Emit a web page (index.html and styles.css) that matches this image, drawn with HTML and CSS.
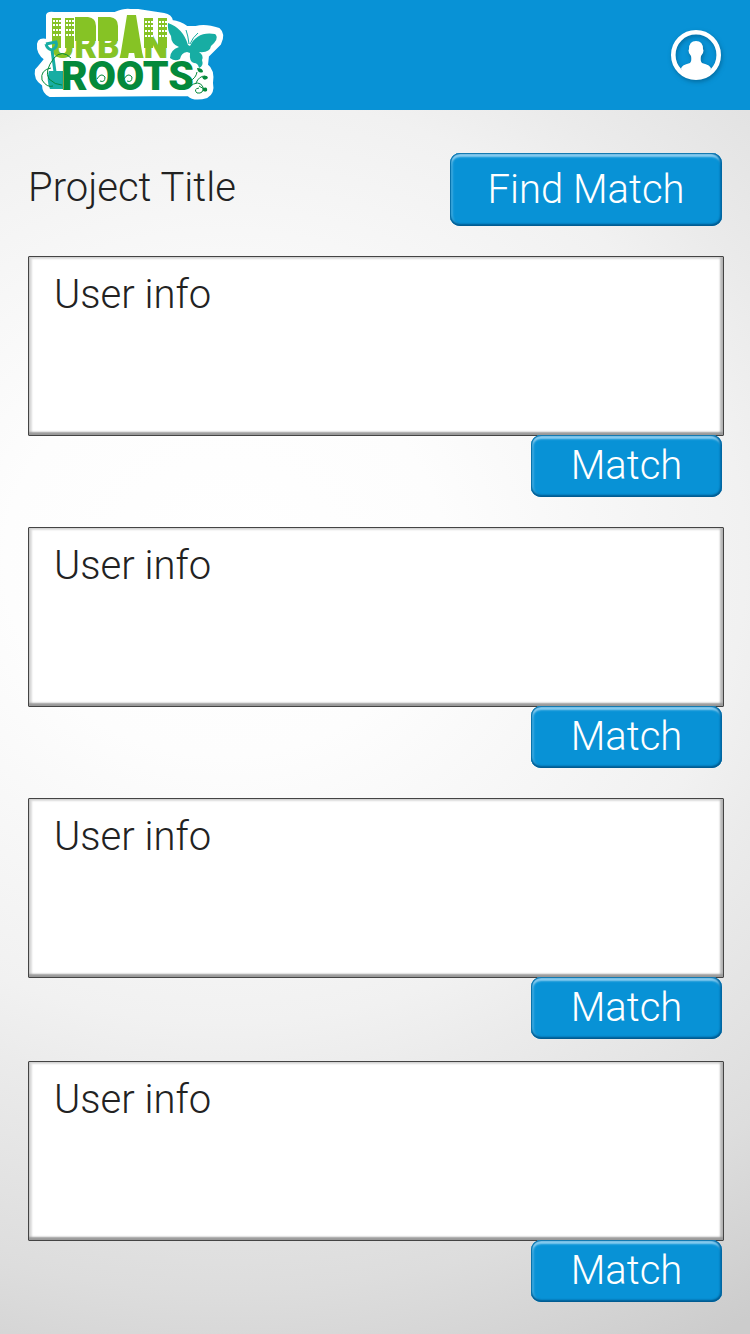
FILE: index.html
```html
<!DOCTYPE html>
<html lang="en">
<head>
<meta charset="utf-8">
<meta name="viewport" content="width=device-width, initial-scale=1">
<title>Urban Roots</title>
<link rel="stylesheet" href="styles.css">
</head>
<body>
<header class="topbar">
  <a class="brand" href="#" aria-label="Urban Roots">
    <svg class="brand-logo" viewBox="30 5 200 100" width="200" height="100">
      <path class="sticker" d="M47 15 Q48 12 54 13 L115 13 Q125 9 130 10 L138 10 L164 14 Q171 15 172 21 Q180 22 187 27 L196 27 Q205 24 219 29 Q225 34 220 44 L208 56 L207 65 Q214 70 212 83 Q214 93 207 97 Q194 101 188 95 L50 96 Q43 93 43 85 Q34 79 36 70 Q42 63 45 59 Q37 53 38 44 Q39 38 47 40 Z"/>
      <g class="lime">
        <path d="M52 18h9v30h-9zM65 18h9v30h-9zM75 17h13q8 1 8 9v15H75zM98 17h12q8 1 8 9v15H98zM127 15h9l7 43h-8l-1-6h-5l-1 6h-8zM144 18h9v30h-9zM158 18h9v30h-9z"/>
        <text class="urban" x="51" y="58">URBAN</text>
      </g>
      <path class="windows" d="M53 21h8M53 25h8M53 30h8M53 35h8M66 21h8M66 25h8M66 30h8M66 35h8M145 22h8M145 26h8M145 31h8M145 36h8M159 22h8M159 26h8M159 31h8M159 36h8"/>
      <g class="teal">
        <path d="M49 71h14v18H50q-4-9-1-18z"/>
        <path class="teal-line" d="M46 44l10-2q2 5-4 8q-5-1-6-6M52 50l3 22"/>
        <path d="M188 45Q183 28 168 23q-1 7 3 13q0 8 8 11q-9 3-9 11q5 4 10 1q1-6 7-7l3 1q-1 9 4 10q4 0 5 5q5-2 3-8q2-5-3-8q11 1 12-6q8-7 5-11l-1-1q-18-3-25 12z"/>
        <path class="antenna" d="M189 44q-1-9-3-14M190 44q3-7 8-11"/>
      </g>
      <text class="roots" x="61" y="90">ROOTS</text>
      <g class="vine">
        <path d="M71 58q-9-9-17 0q-10 13-5 21q6 6 13 6M51 68q-11 2-9 12q5 8 11 6M97 79q4-7 8-2q0 6-5 4M124 79q4-7 8-2q0 6-5 4M189 87q10-8 14 0q1 7-6 6q-4-4 2-5M190 81q6-3 7-9M196 83q3-7 9-7M199 86q4 2 7 5"/>
        <path class="leaf" d="M197 68q6 0 6 4q-5 2-6-4zM202 77q5-3 6 1q-4 4-6-1zM203 88q5-2 4 3q-5 2-4-3z"/>
      </g>
    </svg>
  </a>
  <button class="profile" type="button" aria-label="Profile">
    <svg viewBox="0 0 50 50" width="50" height="50">
      <circle class="ring" cx="25" cy="25" r="22.7"/>
      <path class="person" d="M25 11q7 0 7 8q1 1 0 4l-2 3q-1 5 1 7q9 2 9 6q-5 9-15 9T10 39q0-4 9-6q2-2 1-7l-2-3q-1-3 0-4q0-8 7-8z"/>
    </svg>
  </button>
</header>
<main class="content">
  <div class="heading">
    <h1 class="title">Project Title</h1>
    <button class="btn btn-large" type="button">Find Match</button>
  </div>
  <ul class="entries">
    <li class="entry"><div class="card">User info</div><button class="btn" type="button">Match</button></li>
    <li class="entry"><div class="card">User info</div><button class="btn" type="button">Match</button></li>
    <li class="entry"><div class="card">User info</div><button class="btn" type="button">Match</button></li>
    <li class="entry"><div class="card">User info</div><button class="btn" type="button">Match</button></li>
  </ul>
</main>
</body>
</html>
```
FILE: styles.css
```css
* { box-sizing: border-box; }

body {
  margin: 0;
  min-height: 100vh;
  background: radial-gradient(1000px 890px at 30% 42%, #ffffff 0%, #fdfdfd 22%, #f1f1f1 52%, #ebebeb 60%, #dddddd 82%, #cccccc 100%);
  color: #222222;
  font: 300 40px/50px Roboto, "Liberation Sans", sans-serif;
}

.topbar {
  display: flex;
  align-items: center;
  justify-content: space-between;
  height: 110px;
  padding: 0 29px 0 30px;
  background: #0892d6;
}

.brand-logo, .profile svg { display: block; overflow: visible; }
.sticker { fill: #ffffff; stroke: #ffffff; stroke-width: 2; stroke-linejoin: round; }
.lime { fill: #86c325; }
.urban { font: 900 35px Roboto, sans-serif; }
.windows { fill: none; stroke: #ffffff; stroke-width: 2; stroke-dasharray: 2 1; }
.teal { fill: #17ada3; }
.teal-line { fill: none; stroke: #17ada3; stroke-width: 3; }
.antenna { fill: none; stroke: #17ada3; stroke-width: 1; }
.roots { fill: #04893b; font: 900 41px Roboto, sans-serif; }
.vine { fill: none; stroke: #04893b; stroke-width: 1; }
.leaf { fill: #04893b; stroke: none; }

.profile {
  padding: 0;
  border: 0;
  border-radius: 50%;
  background: none;
  filter: drop-shadow(1px 2px 2px #00456980);
}
.ring { fill: none; stroke: #ffffff; stroke-width: 4.6; }
.person { fill: #ffffff; }

.content { padding: 43px 26px 32px 28px; }

.heading {
  display: flex;
  align-items: center;
  justify-content: space-between;
  padding-right: 2px;
}
.title { margin: 0; padding-bottom: 4px; font: inherit; }

.btn {
  min-width: 191px;
  padding: 6px 20px;
  border: 0;
  border-radius: 10px;
  background: #0892d6;
  box-shadow:
    inset 0 -2px 2px #005a90,
    inset -2px 0 2px #006ba8,
    inset 1px 0 1px #067ab5,
    inset 0 1px 1px #1479ae,
    inset 0 4px 2px #8acdf0,
    inset 3px 0 2px #3aa9df;
  color: #ffffff;
  font: inherit;
  cursor: pointer;
}
.btn-large { min-width: 272px; padding: 12px 20px 11px; }

.entries { margin: 30px 0 0; padding: 0; list-style: none; }
.entry {
  display: flex;
  flex-direction: column;
  margin-top: 30px;
}
.entry:last-child { margin-top: 22px; }
.entry .btn { align-self: flex-end; margin: -1px 2px 0 0; }

.card {
  min-height: 180px;
  padding: 13px 25px;
  border: 1px solid #444444;
  border-radius: 1px;
  background: #ffffff;
  box-shadow:
    inset 0 -3px 2px #999999,
    inset -3px 0 2px #bbbbbb,
    inset 3px 0 2px #dddddd,
    inset 0 2px 2px #dddddd;
}
```
